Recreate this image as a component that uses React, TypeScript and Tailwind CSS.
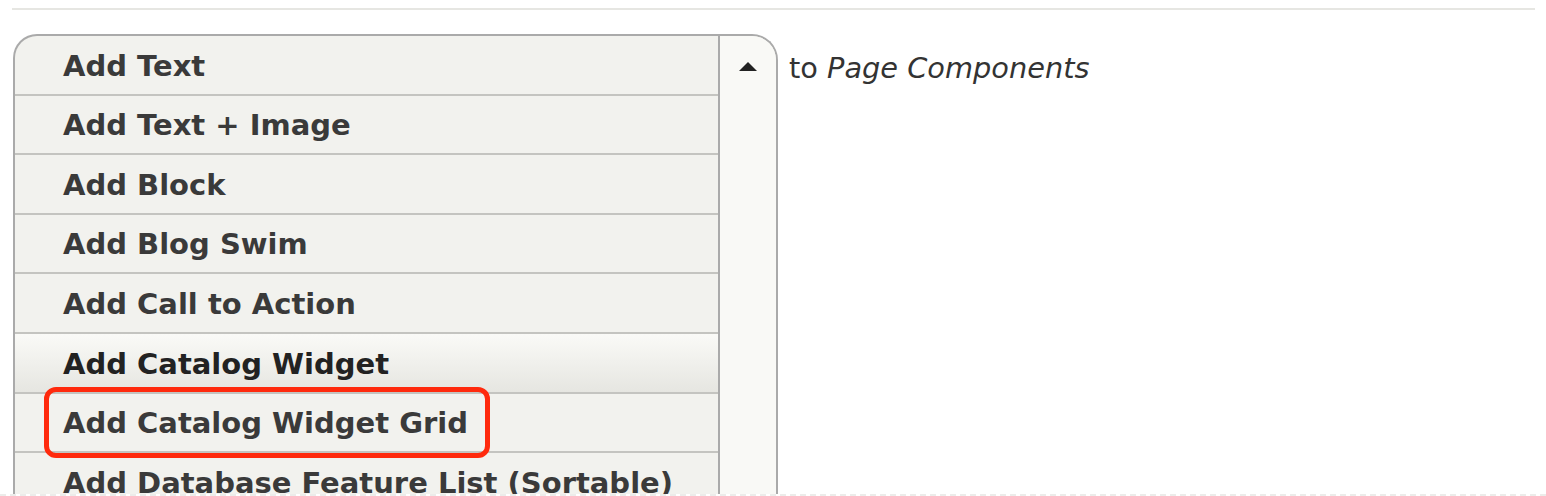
import React from "react";

const items = [
  "Add Text",
  "Add Text + Image",
  "Add Block",
  "Add Blog Swim",
  "Add Call to Action",
  "Add Catalog Widget",
  "Add Catalog Widget Grid",
  "Add Database Feature List (Sortable)",
];

export default function App() {
  return (
    <div
      className="relative h-[496px] w-[1546px] overflow-hidden bg-white"
      style={{ fontFamily: '"DejaVu Sans", "Liberation Sans", sans-serif' }}
    >
      <div className="h-[494px] overflow-hidden">
        <div className="pt-[8px] pl-[12px] pr-[11px]">
          <div className="h-[2px] bg-[#e6e6e2]" />
        </div>
        <div className="mt-[24px] ml-[13px] flex items-start">
          <div className="flex w-[765px] overflow-hidden rounded-tl-[24px] rounded-tr-[26px] border-2 border-b-0 border-[#aaaaaa] bg-[#f2f2ee]">
            <div className="flex-1">
              {items.map((t, i) => (
                <div
                  key={t}
                  className={
                    i === 5
                      ? "flex h-[59.6px] items-center border-b-2 border-[#c4c4c0] bg-gradient-to-b from-[#fafaf7] to-[#e6e6e1] pl-[48px] pt-[3px] text-[29px] font-bold text-[#222222]"
                      : "flex h-[59.6px] items-center border-b-2 border-[#c4c4c0] pl-[48px] pt-[3px] text-[29px] font-bold text-[#3a3a3a]"
                  }
                >
                  <span className="whitespace-nowrap">{t}</span>
                </div>
              ))}
            </div>
            <div className="w-[58px] border-l-2 border-[#aaaaaa] bg-[#f9f9f6]">
              <div className="flex justify-center pt-[26px]">
                <svg width="18" height="9" viewBox="0 0 18 9">
                  <polygon points="9,0 18,9 0,9" fill="#222" />
                </svg>
              </div>
            </div>
          </div>
          <div className="ml-[11px] pt-[14px] text-[28.8px] leading-[40px] text-[#333333] whitespace-nowrap">
            to <i>Page Components</i>
          </div>
        </div>
      </div>
      <div className="h-[2px] border-t-2 border-dashed border-[#ececea]" />
      <div className="absolute left-[44px] top-[387px] h-[71px] w-[446px] rounded-[12px] border-[5px] border-[#ff2a0d]" />
    </div>
  );
}
